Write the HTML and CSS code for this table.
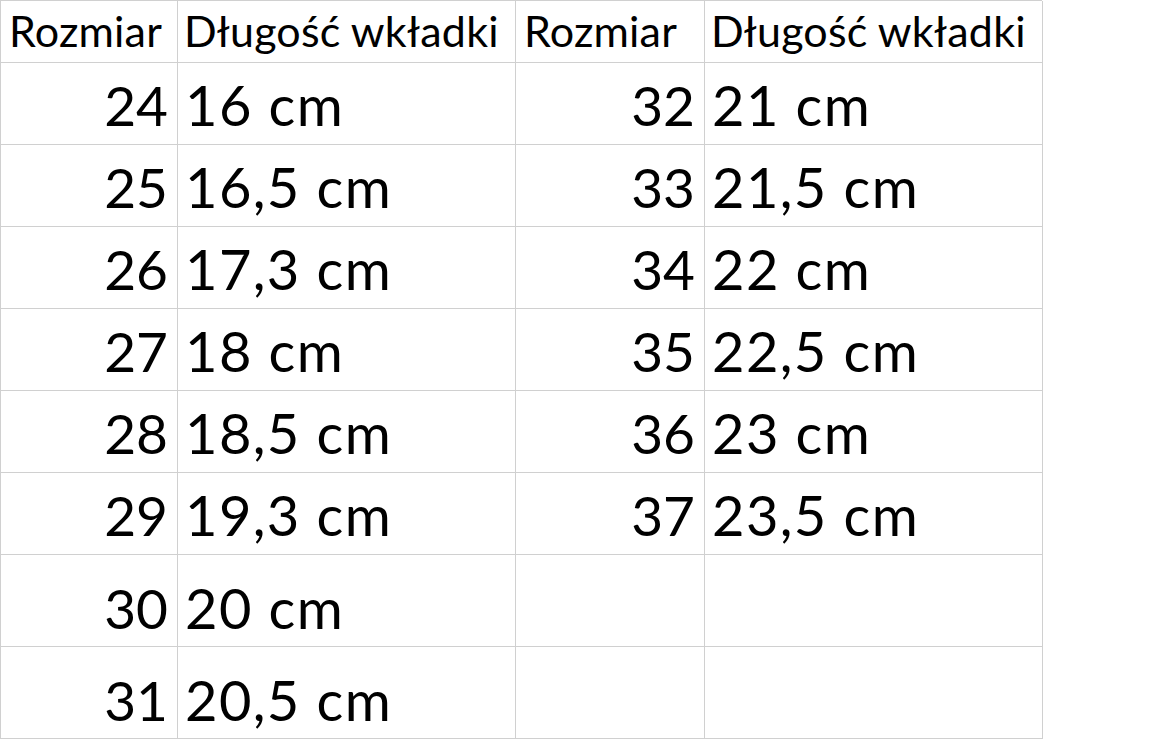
FILE: index.html
```html
<!DOCTYPE html>
<html lang="pl">
<head>
<meta charset="utf-8">
<title>Rozmiary</title>
<link rel="stylesheet" href="styles.css">
</head>
<body>
<div class="sheet">
  <div class="cell head">Rozmiar</div>
  <div class="cell head wide">Długość wkładki</div>
  <div class="cell head">Rozmiar</div>
  <div class="cell head wide">Długość wkładki</div>

  <div class="cell num">24</div><div class="cell val">16 cm</div>
  <div class="cell num">32</div><div class="cell val">21 cm</div>

  <div class="cell num">25</div><div class="cell val">16,5 cm</div>
  <div class="cell num">33</div><div class="cell val">21,5 cm</div>

  <div class="cell num">26</div><div class="cell val">17,3 cm</div>
  <div class="cell num">34</div><div class="cell val">22 cm</div>

  <div class="cell num">27</div><div class="cell val">18 cm</div>
  <div class="cell num">35</div><div class="cell val">22,5 cm</div>

  <div class="cell num">28</div><div class="cell val">18,5 cm</div>
  <div class="cell num">36</div><div class="cell val">23 cm</div>

  <div class="cell num">29</div><div class="cell val">19,3 cm</div>
  <div class="cell num">37</div><div class="cell val">23,5 cm</div>

  <div class="cell num tall">30</div><div class="cell val tall">20 cm</div>
  <div class="cell num tall"></div><div class="cell val tall"></div>

  <div class="cell num tall">31</div><div class="cell val tall">20,5 cm</div>
  <div class="cell num tall"></div><div class="cell val tall"></div>
</div>
</body>
</html>
```

FILE: styles.css
```css
* {
  box-sizing: border-box;
}

html, body {
  margin: 0;
  padding: 0;
  background: #ffffff;
}

body {
  width: 1152px;
  height: 739px;
  overflow: hidden;
  font-family: "Lato", "Liberation Sans", sans-serif;
  color: #000000;
}

.sheet {
  display: grid;
  grid-template-columns: 177px 338px 189px 338px;
  grid-template-rows: 62px repeat(6, 82px) 92px 92px;
  width: 1042px;
  border-left: 1px solid #d0d0d0;
  border-top: 1px solid #d0d0d0;
}

.cell {
  display: flex;
  align-items: flex-end;
  border-right: 1px solid #d0d0d0;
  border-bottom: 1px solid #d0d0d0;
  line-height: 1;
  white-space: nowrap;
  overflow: hidden;
}

.head {
  font-size: 43px;
  letter-spacing: 0.2px;
  padding: 0 0 10px 8px;
}

.head.wide {
  padding-left: 6px;
}

.num {
  justify-content: flex-end;
  font-size: 55px;
  padding: 0 9px 11px 0;
}

.val {
  font-size: 56px;
  word-spacing: 0;
  letter-spacing: 1.4px;
  padding: 0 0 11px 7px;
}

.tall {
  padding-bottom: 10px;
}
```
